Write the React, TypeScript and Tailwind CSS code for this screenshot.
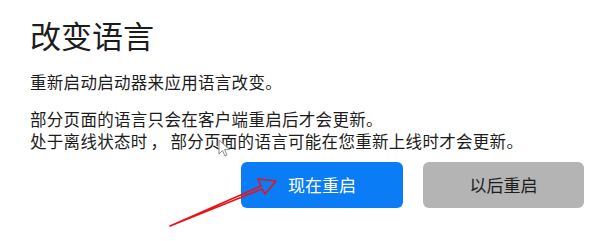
import React from 'react';

const font = { fontFamily: '"Noto Sans CJK SC", "Noto Sans", sans-serif' };

const App = () => {
  return (
    <div className="relative w-[603px] h-[241px] bg-white overflow-hidden text-[#1c1c1c]" style={font}>
      <div className="flex flex-col pl-[30px] pt-[13px]">
        <h1 className="text-[31px] leading-[44px] font-normal">改变语言</h1>
        <p className="mt-[14px] text-[16.5px] leading-[22px] tracking-[0.3px]">重新启动启动器来应用语言改变。</p>
        <div className="mt-[15px] text-[16.5px] leading-[22px] tracking-[0.3px]">
          <p>部分页面的语言只会在客户端重启后才会更新。</p>
          <p>
            处于离线状态时<span className="px-[3px]">，</span>部分页面的语言可能在您重新上线时才会更新。
          </p>
        </div>
        <div className="flex gap-[20px] ml-[211px] mt-[10px]">
          <button className="w-[162px] h-[46px] rounded-[6px] bg-[#0a7cf5] text-white text-[17px]">现在重启</button>
          <button className="w-[161px] h-[46px] rounded-[6px] bg-[#b4b4b4] text-[#1c1c1c] text-[17px]">以后重启</button>
        </div>
      </div>

      {/* annotation arrow */}
      <svg className="absolute left-0 top-0 pointer-events-none" width="603" height="241">
        <polygon
          points="170,226 261,186 258,179 276,181 265,194 262,189"
          fill="none"
          stroke="#e8141c"
          strokeWidth="1.6"
          strokeLinejoin="round"
        />
      </svg>

      {/* mouse cursor */}
      <svg className="absolute left-[218px] top-[139px] pointer-events-none" width="14" height="20" viewBox="0 0 14 20">
        <path d="M1 1 L1 15 L4.5 11.5 L7 17 L9 16 L6.6 10.6 L11.5 10.6 Z" fill="#fff" stroke="#8a8a8a" strokeWidth="1" strokeLinejoin="round" />
      </svg>
    </div>
  );
};

export default App;
